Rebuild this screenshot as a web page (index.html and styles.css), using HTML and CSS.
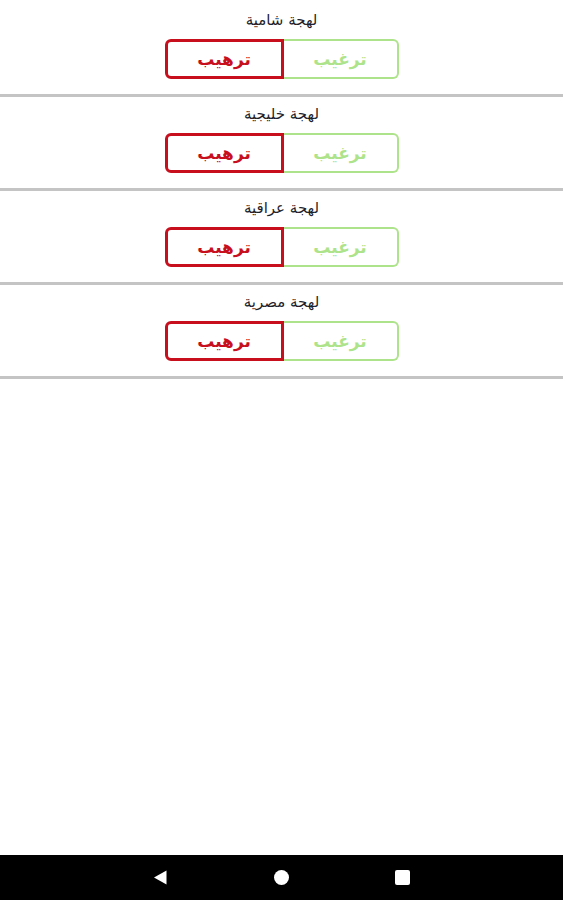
FILE: index.html
```html
<!DOCTYPE html>
<html lang="ar">
<head>
<meta charset="utf-8">
<title>لهجات</title>
<link rel="stylesheet" href="styles.css">
</head>
<body>
<div class="screen">
  <main class="list">
    <section class="row">
      <div class="title">لهجة شامية</div>
      <div class="group">
        <button class="btn btn-red">ترهيب</button>
        <button class="btn btn-green">ترغيب</button>
      </div>
    </section>
    <section class="row">
      <div class="title">لهجة خليجية</div>
      <div class="group">
        <button class="btn btn-red">ترهيب</button>
        <button class="btn btn-green">ترغيب</button>
      </div>
    </section>
    <section class="row">
      <div class="title">لهجة عراقية</div>
      <div class="group">
        <button class="btn btn-red">ترهيب</button>
        <button class="btn btn-green">ترغيب</button>
      </div>
    </section>
    <section class="row">
      <div class="title">لهجة مصرية</div>
      <div class="group">
        <button class="btn btn-red">ترهيب</button>
        <button class="btn btn-green">ترغيب</button>
      </div>
    </section>
  </main>
  <nav class="navbar">
    <svg class="nav-icon" width="15" height="15" viewBox="0 0 15 15"><path d="M13.5 0.5 L13.5 14.5 L1 7.5 Z" fill="#fff"/></svg>
    <svg class="nav-icon" width="15" height="15" viewBox="0 0 15 15"><circle cx="7.5" cy="7.5" r="7.5" fill="#fff"/></svg>
    <svg class="nav-icon" width="15" height="15" viewBox="0 0 15 15"><rect x="0" y="0" width="15" height="15" rx="2" fill="#fff"/></svg>
  </nav>
</div>
</body>
</html>
```

FILE: styles.css
```css
* { box-sizing: border-box; }
html, body {
  margin: 0;
  padding: 0;
  background: #fff;
}
.screen {
  width: 563px;
  height: 900px;
  display: flex;
  flex-direction: column;
  font-family: "DejaVu Sans", sans-serif;
}
.list {
  flex: 1;
  padding-top: 3px;
}
.row {
  display: flex;
  flex-direction: column;
  align-items: center;
  padding: 5px 0 15px;
  border-bottom: 3px solid #c4c4c4;
}
.title {
  height: 25px;
  line-height: 25px;
  margin-bottom: 6px;
  font-size: 15px;
  color: #1f1f2b;
}
.group {
  display: flex;
  direction: ltr;
  width: 234px;
  height: 40px;
}
.btn {
  flex: 1;
  margin: 0;
  padding: 0;
  background: #fff;
  font-family: "DejaVu Sans", sans-serif;
  font-weight: bold;
  font-size: 17px;
  line-height: 1;
  cursor: pointer;
}
.btn-red {
  color: #c80f1e;
  border: 3px solid #c80f1e;
  border-radius: 6px 0 0 6px;
}
.btn-green {
  color: #ade38a;
  border: 2.5px solid #ade38a;
  border-left: none;
  border-radius: 0 6px 6px 0;
}
.navbar {
  height: 45px;
  background: #000;
  display: flex;
  align-items: center;
  gap: 106px;
  padding: 0 0 0 153px;
}
.nav-icon {
  display: block;
}
```
